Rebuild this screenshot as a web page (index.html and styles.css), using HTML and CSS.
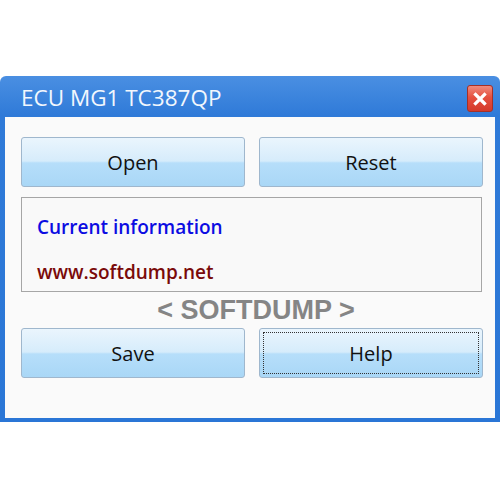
FILE: index.html
```html
<!DOCTYPE html>
<html>
<head>
<meta charset="utf-8">
<link rel="stylesheet" href="styles.css">
</head>
<body>
<div class="window">
  <div class="titlebar">
    <span class="title">ECU MG1 TC387QP</span>
    <div class="close">
      <svg width="14" height="14" viewBox="0 0 14 14"><path d="M2.5 2.5 L11.5 11.5 M11.5 2.5 L2.5 11.5" stroke="#fff" stroke-width="3.2" stroke-linecap="square"/></svg>
    </div>
  </div>
  <div class="content">
    <div class="row">
      <button class="btn">Open</button>
      <button class="btn">Reset</button>
    </div>
    <div class="info">
      <div class="current">Current information</div>
      <div class="url">www.softdump.net</div>
    </div>
    <div class="brand">&lt; SOFTDUMP &gt;</div>
    <div class="row">
      <button class="btn">Save</button>
      <button class="btn focus"><span class="focusring">Help</span></button>
    </div>
  </div>
</div>
</body>
</html>
```
FILE: styles.css
```css
html, body {
  margin: 0;
  padding: 0;
  background: #ffffff;
}
body {
  padding-top: 76px;
  width: 500px;
  height: 500px;
  box-sizing: border-box;
}
.window {
  width: 500px;
  box-sizing: border-box;
  background: linear-gradient(#4a8fe2, #2f7ad8 40px, #2a76d6);
  border-radius: 6px 6px 0 0;
  padding: 0 5px 4px 5px;
}
.titlebar {
  height: 41px;
  display: flex;
  align-items: center;
  justify-content: space-between;
  padding: 0 2px 0 16px;
}
.title {
  font-family: "Open Sans", "Noto Sans", sans-serif;
  font-size: 22.5px;
  color: #f2f7fd;
  padding-top: 2px;
}
.close {
  width: 24px;
  height: 25px;
  margin-top: 4px;
  border: 1px solid #a53027;
  border-radius: 3px;
  background: linear-gradient(#f08a7c, #e5503f 45%, #d43a2b);
  display: flex;
  align-items: center;
  justify-content: center;
}
.content {
  background: #fafafa;
  height: 301px;
  padding: 20px 12px 0 16px;
  box-sizing: border-box;
}
.row {
  display: grid;
  grid-template-columns: 224px 224px;
  column-gap: 14px;
}
.btn {
  height: 50px;
  margin: 0;
  border: 1px solid #9fb7cd;
  border-radius: 3px;
  background: linear-gradient(#eaf5fd 0%, #d6ecfb 48%, #b6defa 52%, #a9d7f6 100%);
  font-family: "Open Sans", "Noto Sans", sans-serif;
  font-size: 20px;
  color: #111;
  padding: 0;
  display: flex;
  align-items: center;
  justify-content: center;
}
.btn.focus {
  padding: 3px;
}
.focusring {
  flex: 1;
  align-self: stretch;
  display: flex;
  align-items: center;
  justify-content: center;
  border: 1px dotted #333;
}
.info {
  margin-top: 10px;
  width: 461px;
  height: 95px;
  box-sizing: border-box;
  border: 1px solid #a6a6a6;
  background: #f9f9f9;
  padding: 14px 0 0 15px;
  font-family: "Open Sans", "Noto Sans", sans-serif;
  font-size: 19px;
  font-weight: 600;
}
.current {
  color: #0c0ce2;
  line-height: 30px;
}
.url {
  color: #7a0a0a;
  line-height: 30px;
  margin-top: 15px;
}
.brand {
  height: 36px;
  width: 461px;
  display: flex;
  align-items: center;
  justify-content: center;
  font-family: "Liberation Sans", Arial, sans-serif;
  font-weight: bold;
  font-size: 27px;
  color: #858585;
  padding-left: 9px;
  box-sizing: border-box;
}
```
